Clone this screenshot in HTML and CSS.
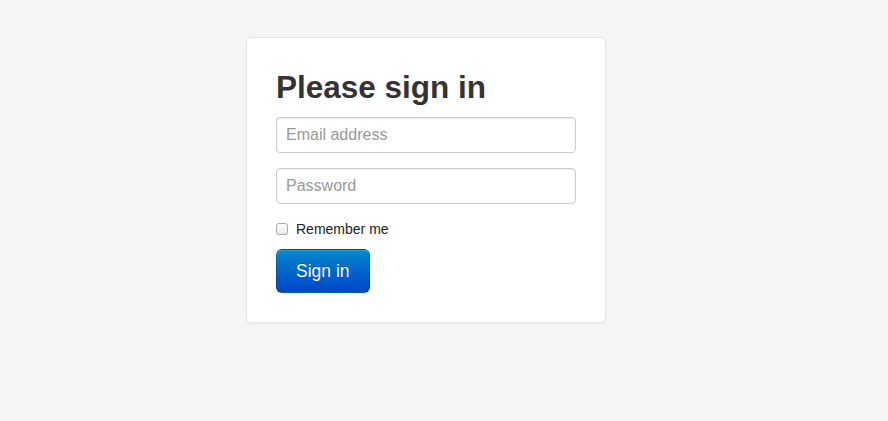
FILE: index.html
```html
<!DOCTYPE html>
<html lang="en">
<head>
    <meta charset="UTF-8">
    <meta name="viewport" content="width=device-width, initial-scale=1.0">
    <title>Sign in</title>
    <link rel="stylesheet" href="styles.css">
</head>
<body>
    <div class="container">
        <form class="form-signin">
            <h2 class="form-signin-heading">Please sign in</h2>
            <input type="text" class="input-block-level" placeholder="Email address">
            <input type="password" class="input-block-level" placeholder="Password">
            <label class="checkbox">
                <input type="checkbox" value="remember-me"> Remember me
            </label>
            <button class="btn btn-large btn-primary" type="submit">Sign in</button>
        </form>
    </div>
</body>
</html>
```

FILE: styles.css
```css
body {
    margin: 0;
    padding-top: 37px;
    background-color: #f5f5f5;
    font-family: "Liberation Sans", Arial, sans-serif;
    font-size: 14px;
    line-height: 20px;
    color: #333;
}
.container {
    padding-left: 246px;
}
.form-signin {
    width: 300px;
    padding: 19px 29px 29px;
    margin: 0 0 20px;
    background-color: #fff;
    border: 1px solid #e5e5e5;
    border-radius: 5px;
    box-shadow: 0 1px 2px rgba(0, 0, 0, .05);
}
.form-signin-heading {
    font-size: 31.5px;
    line-height: 40px;
    font-weight: bold;
    margin: 10px 0 10px;
    color: #333;
}
.input-block-level {
    display: block;
    width: 100%;
    box-sizing: border-box;
    height: 36px;
    font-family: inherit;
    font-size: 16px;
    line-height: 20px;
    padding: 7px 9px;
    margin: 0 0 15px;
    color: #555;
    border: 1px solid #ccc;
    border-radius: 4px;
    box-shadow: inset 0 1px 1px rgba(0, 0, 0, .075);
    outline: none;
}
.input-block-level::placeholder {
    color: #999;
}
.checkbox {
    display: block;
    min-height: 20px;
    padding-left: 20px;
    margin-bottom: 10px;
    color: #222;
}
.checkbox input {
    appearance: none;
    float: left;
    box-sizing: border-box;
    width: 12px;
    height: 12px;
    margin: 4px 0 0 -20px;
    border: 1px solid #a9a9a9;
    border-radius: 3px;
    background: linear-gradient(to bottom, #fff, #e9e9e9);
}
.btn {
    display: inline-block;
    font-family: inherit;
    cursor: pointer;
    border-radius: 6px;
}
.btn-large {
    padding: 11px 19px;
    font-size: 17.5px;
    line-height: 20px;
}
.btn-primary {
    color: #fff;
    text-shadow: 0 -1px 0 rgba(0, 0, 0, .25);
    background-color: #006dcc;
    background-image: linear-gradient(to bottom, #0088cc, #0044cc);
    border: 1px solid;
    border-color: rgba(0, 0, 0, .1) rgba(0, 0, 0, .1) rgba(0, 0, 0, .25);
    box-shadow: inset 0 1px 0 rgba(255, 255, 255, .2), 0 1px 2px rgba(0, 0, 0, .05);
}
```
